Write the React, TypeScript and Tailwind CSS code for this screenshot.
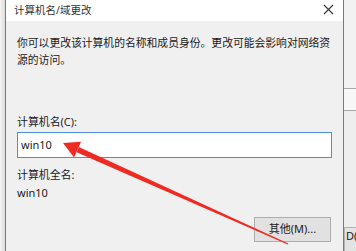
export default function App() {
  return (
    <div className="relative flex h-[251px] w-[356px] overflow-hidden bg-[#f0f0f0] font-['Noto_Sans','Noto_Sans_CJK_SC',sans-serif] text-[#1a1a1a]">
      {/* window behind, left edge */}
      <div className="w-[5px] shrink-0 bg-gradient-to-r from-[#f4f4f4] to-[#dcdcdc]" />

      {/* dialog */}
      <div className="flex w-[339px] shrink-0 flex-col border-x border-[#3d86d6] bg-[#f0f0f0]">
        <div className="flex h-[21px] items-center justify-between bg-white pl-[8px] pr-[9px]">
          <span className="text-[10.5px] leading-none text-[#333]">计算机名/域更改</span>
          <svg width="11" height="11" viewBox="0 0 11 11" className="mt-[-2px]">
            <path d="M1 1 L10 10 M10 1 L1 10" stroke="#333" strokeWidth="1.1" />
          </svg>
        </div>

        <div className="flex flex-1 flex-col pl-[11px] pr-[11px]">
          <p className="mt-[13px] w-[322px] text-[10.8px] leading-[17px]">
            你可以更改该计算机的名称和成员身份。更改可能会影响对网络资源的访问。
          </p>

          <div className="mt-[45px] text-[10.9px] leading-[17px]">计算机名(C):</div>
          <div className="mt-[2px] flex h-[26px] w-[315px] items-center border border-[#4b8fd6] bg-white px-[3px] text-[11px]">
            win10
          </div>

          <div className="mt-[8px] text-[10.9px] leading-[17px]">计算机全名:</div>
          <div className="mt-[1px] text-[11px] leading-[17px]">win10</div>

          <div className="mt-[16px] flex justify-end pr-[1px]">
            <button className="h-[25px] w-[77px] border border-[#adadad] bg-[#e1e1e1] text-[11px] text-[#1a1a1a]">
              其他(M)...
            </button>
          </div>
        </div>
      </div>

      {/* window behind, right edge */}
      <div className="flex flex-1 flex-col bg-[#eeeeee]">
        <div className="h-[88px] bg-[#f2f2f2]" />
        <div className="h-[23px] border-y border-[#a8a8a8] bg-[#f7f7f7]" />
        <div className="h-[116px]" />
        <div className="flex-1 border-l border-t border-[#b5b5b5] bg-[#e3e3e3] pl-[1px] pt-[2px] text-[11px] leading-none">
          D(
        </div>
      </div>

      {/* red annotation arrow */}
      <svg className="pointer-events-none absolute left-0 top-0" width="356" height="251" viewBox="0 0 356 251">
        <polygon points="63,143 81,141.8 74,157.4" fill="#ee2a22" />
        <polygon points="76.6,152.2 78.8,147 288.3,243.6 287.7,244.6" fill="#ee2a22" />
      </svg>
    </div>
  );
}
